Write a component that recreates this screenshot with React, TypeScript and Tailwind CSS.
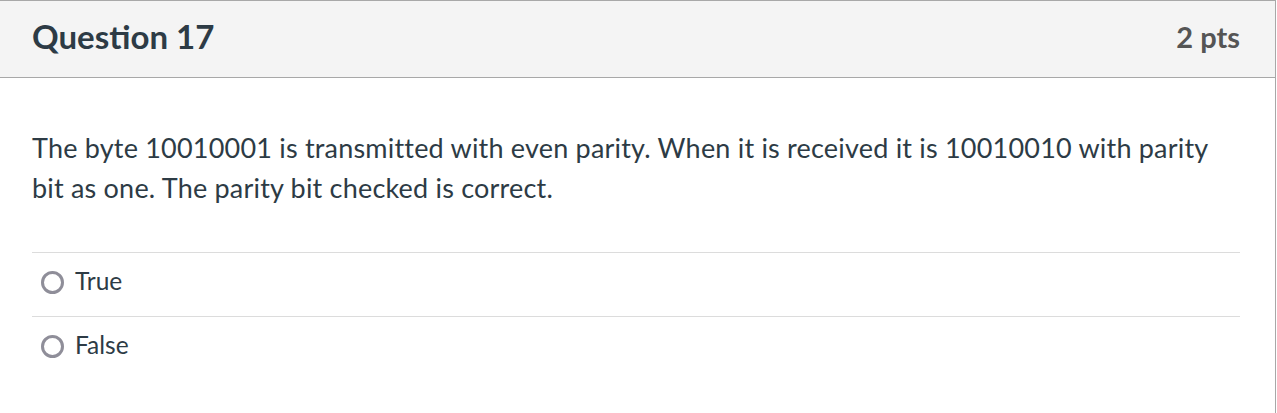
import React from 'react';

interface AnswerOption {
  id: string;
  label: string;
}

const answers: AnswerOption[] = [
  { id: 'true', label: 'True' },
  { id: 'false', label: 'False' },
];

const App: React.FC = () => {
  return (
    <div className="min-h-screen bg-white font-['Lato','Liberation_Sans',sans-serif] text-[#2d3b45]">
      <div className="w-[1276px] border-t border-r border-[#a8a8a8]">
        {/* header */}
        <div className="h-[77px] flex items-center justify-between bg-[#f4f4f4] border-b border-[#a8a8a8] pl-8 pr-[35px] pb-[5px]">
          <h2 className="text-[33px] font-bold leading-none">Question 17</h2>
          <span className="text-[29px] font-bold leading-none text-[#555555]">2 pts</span>
        </div>

        {/* body */}
        <div className="pl-8 pr-[35px] pt-[50px] pb-[33px]">
          <p className="text-[27px] leading-[40px] tracking-[0.2px]">
            The byte 10010001 is transmitted with even parity. When it is received it is 10010010 with parity
            bit as one. The parity bit checked is correct.
          </p>

          <div className="mt-[44px]">
            {answers.map((a) => (
              <label
                key={a.id}
                className="flex items-center h-[64px] border-t border-[#dcdcdc] pl-[9px] pb-[4px] gap-[11px] cursor-pointer"
              >
                <span className="w-[23px] h-[23px] rounded-full border-[3px] border-[#8f8e99] bg-white" />
                <span className="text-[24.5px] leading-none -mt-[3px]">{a.label}</span>
              </label>
            ))}
          </div>
        </div>
      </div>
    </div>
  );
};

export default App;
